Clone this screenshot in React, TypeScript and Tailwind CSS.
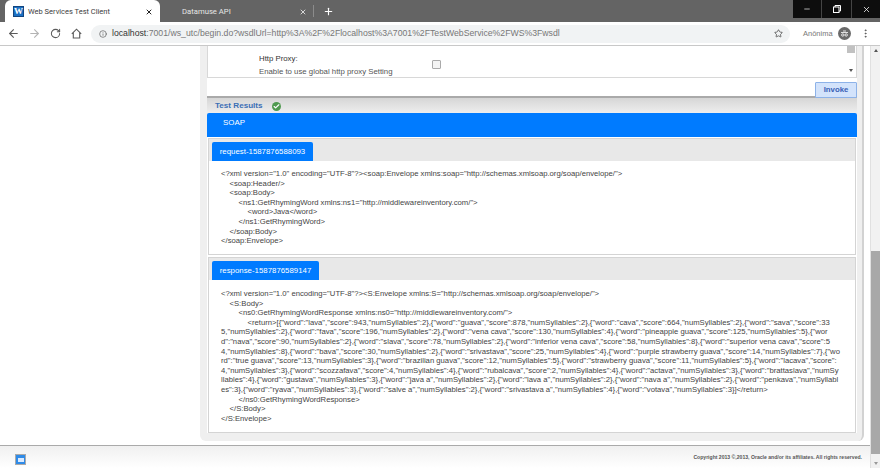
import React from 'react';
import { ArrowLeft, ArrowRight, RotateCw, Info, Star, X, Plus, Minus, MoreVertical, Check } from 'lucide-react';

const requestLines = [
  { pad: 'pl-0', text: '<?xml version="1.0" encoding="UTF-8"?><soap:Envelope xmlns:soap="http://schemas.xmlsoap.org/soap/envelope/">' },
  { pad: 'pl-[8.5px]', text: '<soap:Header/>' },
  { pad: 'pl-[8.5px]', text: '<soap:Body>' },
  { pad: 'pl-[17.5px]', text: '<ns1:GetRhymingWord xmlns:ns1="http://middlewareinventory.com/">' },
  { pad: 'pl-[26.5px]', text: '<word>Java</word>' },
  { pad: 'pl-[17.5px]', text: '</ns1:GetRhymingWord>' },
  { pad: 'pl-[8.5px]', text: '</soap:Body>' },
  { pad: 'pl-0', text: '</soap:Envelope>' },
];

const responseLines = [
  { pad: 'pl-0', text: '<?xml version="1.0" encoding="UTF-8"?><S:Envelope xmlns:S="http://schemas.xmlsoap.org/soap/envelope/">' },
  { pad: 'pl-[8.5px]', text: '<S:Body>' },
  { pad: 'pl-[17.5px]', text: '<ns0:GetRhymingWordResponse xmlns:ns0="http://middlewareinventory.com/">' },
  { pad: 'pl-[26.5px]', text: '<return>[{"word":"lava","score":943,"numSyllables":2},{"word":"guava","score":878,"numSyllables":2},{"word":"cava","score":664,"numSyllables":2},{"word":"sava","score":33' },
  { pad: 'pl-0', text: '5,"numSyllables":2},{"word":"fava","score":196,"numSyllables":2},{"word":"vena cava","score":130,"numSyllables":4},{"word":"pineapple guava","score":125,"numSyllables":5},{"wor' },
  { pad: 'pl-0', text: 'd":"nava","score":90,"numSyllables":2},{"word":"slava","score":78,"numSyllables":2},{"word":"inferior vena cava","score":58,"numSyllables":8},{"word":"superior vena cava","score":5' },
  { pad: 'pl-0', text: '4,"numSyllables":8},{"word":"bava","score":30,"numSyllables":2},{"word":"srivastava","score":25,"numSyllables":4},{"word":"purple strawberry guava","score":14,"numSyllables":7},{"wo' },
  { pad: 'pl-0', text: 'rd":"true guava","score":13,"numSyllables":3},{"word":"brazilian guava","score":12,"numSyllables":5},{"word":"strawberry guava","score":11,"numSyllables":5},{"word":"lacava","score":' },
  { pad: 'pl-0', text: '4,"numSyllables":3},{"word":"scozzafava","score":4,"numSyllables":4},{"word":"rubalcava","score":2,"numSyllables":4},{"word":"actava","numSyllables":3},{"word":"brattaslava","numSy' },
  { pad: 'pl-0', text: 'llables":4},{"word":"gustava","numSyllables":3},{"word":"java a","numSyllables":2},{"word":"lava a","numSyllables":2},{"word":"nava a","numSyllables":2},{"word":"penkava","numSyllabl' },
  { pad: 'pl-0', text: 'es":3},{"word":"ryava","numSyllables":3},{"word":"salve a","numSyllables":2},{"word":"srivastava a","numSyllables":4},{"word":"votava","numSyllables":3}]</return>' },
  { pad: 'pl-[17.5px]', text: '</ns0:GetRhymingWordResponse>' },
  { pad: 'pl-[8.5px]', text: '</S:Body>' },
  { pad: 'pl-0', text: '</S:Envelope>' },
];

const Message: React.FC<{ title: string; lines: { pad: string; text: string }[]; bodyClass: string; tabClass: string }> = ({ title, lines, bodyClass, tabClass }) => (
  <div className="border border-[#d4d4d4] bg-white">
    <div className="flex h-[22px] items-end bg-[#e8e8e8] pl-[3px]">
      <div className={`flex h-[19px] items-center justify-center rounded-t-[2px] bg-[#007bff] text-[7.85px] text-white ${tabClass}`}>{title}</div>
    </div>
    <div className={`whitespace-pre pl-[12px] text-[7.7px] leading-[9.6px] text-[#444] ${bodyClass}`}>
      {lines.map((l, i) => (
        <div key={i} className={l.pad}>{l.text}</div>
      ))}
    </div>
  </div>
);

export default function App() {
  return (
    <div className="flex h-[468px] w-[880px] flex-col overflow-hidden bg-white font-['Liberation_Sans',Arial,sans-serif]">
      {/* tab strip */}
      <div className="flex h-[22px] items-stretch bg-[#646464] font-['Roboto',sans-serif]">
        <div className="ml-[5px] flex w-[155px] items-center rounded-t-[6px] bg-white pl-[8px] pr-[7px] pt-[1px]">
          <div className="flex h-[11px] w-[11px] items-center justify-center border border-[#12457f] bg-[#1b6fc2] font-['Liberation_Serif',serif] text-[9px] font-bold leading-none text-white">W</div>
          <span className="ml-[4px] text-[7.5px] text-[#3c3c3c]">Web Services Test Client</span>
          <X size={8} strokeWidth={3} className="ml-auto text-[#222]" />
        </div>
        <div className="flex w-[153px] items-center pl-[22px] pr-[6px] pt-[1px] text-[7.7px] text-[#e6e6e6]">
          <span>Datamuse API</span>
          <X size={8} strokeWidth={2.5} className="ml-auto text-[#eee]" />
        </div>
        <div className="my-[5px] w-px bg-[#8c8c8c]" />
        <div className="flex w-[28px] items-center justify-center">
          <Plus size={11} strokeWidth={2.5} className="text-white" />
        </div>
        <div className="ml-auto flex h-[18px] w-[87px] bg-[#0d0d0d] text-white">
          <div className="flex w-[29px] items-center justify-center border-r border-[#444]"><Minus size={8} /></div>
          <div className="flex w-[30px] items-center justify-center border-r border-[#444]">
            <svg width="8" height="8" viewBox="0 0 8 8" fill="none" stroke="white" strokeWidth="1">
              <rect x="0.5" y="2" width="5.5" height="5.5" />
              <path d="M2 2V0.5H7.5V6H6" />
            </svg>
          </div>
          <div className="flex flex-1 items-center justify-center"><X size={9} /></div>
        </div>
      </div>

      {/* toolbar */}
      <div className="flex h-[24px] items-center border-b border-[#c8c8c8] bg-white">
        <div className="flex w-[91px] flex-none items-center pl-[3px]">
          <div className="flex w-[21px] justify-center"><ArrowLeft size={13} className="text-[#5a5a5a]" /></div>
          <div className="flex w-[21px] justify-center"><ArrowRight size={13} className="text-[#b4b4b4]" /></div>
          <div className="flex w-[21px] justify-center"><RotateCw size={11} strokeWidth={2.2} className="text-[#5a5a5a]" /></div>
          <div className="flex w-[21px] justify-center">
            <svg width="11" height="11" viewBox="0 0 11 11" fill="none" stroke="#5a5a5a" strokeWidth="1.1">
              <path d="M0.8 5.8L5.5 1.2L10.2 5.8M2.3 4.8V10H8.7V4.8" />
            </svg>
          </div>
        </div>
        <div className="flex h-[18px] w-[699px] flex-none items-center rounded-full bg-[#f1f3f4] pl-[8px] pr-[7px] text-[8.7px]">
          <Info size={8} className="text-[#5a5a5a]" />
          <span className="ml-[5px] text-[#333]">localhost</span>
          <span className="text-[#777]">:7001/ws_utc/begin.do?wsdlUrl=http%3A%2F%2Flocalhost%3A7001%2FTestWebService%2FWS%3Fwsdl</span>
          <Star size={9} className="ml-auto text-[#444]" />
        </div>
        <span className="ml-[13px] text-[7.5px] text-[#777]">Anônima</span>
        <div className="ml-[5px] flex h-[13px] w-[13px] items-center justify-center rounded-full bg-[#6a6a6a]">
          <svg width="9" height="7" viewBox="0 0 9 7" fill="none" stroke="white" strokeWidth="0.8">
            <path d="M1 2.5H8M3 1h3" />
            <circle cx="2.8" cy="5" r="1.2" />
            <circle cx="6.2" cy="5" r="1.2" />
          </svg>
        </div>
        <MoreVertical size={11} className="ml-[9px] text-[#555]" />
      </div>

      {/* page */}
      <div className="flex min-h-0 flex-1">
        <div className="flex min-w-0 flex-1 flex-col">
          <div className="h-[399px] overflow-hidden pl-[200px] pr-[6px]">
            <div className="h-[395px] rounded-b-[6px] border-r-2 border-[#d2d2d2] bg-[#efefef] pl-[7px] pr-[5px]">
              <div className="bg-white">
                <div className="flex h-[32px] border-x border-b border-[#d8d8d8] bg-white">
                  <div className="flex flex-1 items-start pl-[51px] pt-[6px] text-[7.8px] leading-[13px] text-[#555]">
                    <div>
                      <div className="text-[#333]">Http Proxy:</div>
                      <div>Enable to use global http proxy Setting</div>
                    </div>
                    <div className="ml-[39px] mt-[8px] h-[9px] w-[9px] rounded-[1px] border border-[#aaa] bg-[#f4f4f4]" />
                  </div>
                  <div className="mr-[1px] flex w-[9px] flex-col items-center justify-between pb-[5px]">
                    <div className="h-[7px] w-[8px] bg-[#c1c1c1]" />
                    <div className="h-0 w-0 border-x-[2px] border-t-[3px] border-x-transparent border-t-[#555]" />
                  </div>
                </div>
                <div className="flex h-[20px] justify-end border-b-2 border-[#aaa] bg-white pt-[4px]">
                  <div className="flex h-[16px] w-[42px] items-center justify-center rounded-[1px] border border-[#8db2e8] bg-[#d3e3fb] text-[7.8px] font-bold text-[#3a5fb5]">Invoke</div>
                </div>
              </div>
              <div className="flex h-[15px] items-center bg-gradient-to-b from-[#d6d6d6] to-[#eeeeee] pl-[8px] pt-[1px]">
                <span className="text-[8.1px] font-bold text-[#3b6fb5]">Test Results</span>
                <div className="ml-[9px] flex h-[9px] w-[9px] items-center justify-center rounded-full bg-[#4f9a4f]">
                  <Check size={7} strokeWidth={4} className="text-white" />
                </div>
              </div>
              <div className="h-[24px] rounded-t-[2px] bg-[#007bff] pl-[16px] pt-[4px] text-[7.9px] text-white">SOAP</div>
              <div className="flex flex-col gap-[2px] bg-white px-[1px] pt-[1px]">
                <Message title="request-1587876588093" lines={requestLines} tabClass="w-[101px]" bodyClass="h-[93px] pt-[8px]" />
                <Message title="response-1587876589147" lines={responseLines} tabClass="w-[107px]" bodyClass="h-[152px] pt-[9px]" />
              </div>
            </div>
          </div>
          <div className="flex h-[23px] items-start border-t border-[#aaa] bg-gradient-to-b from-[#f0f0f0] to-white pl-[15px] pr-[8px] pt-[8px]">
            <div className="flex h-[11px] w-[11px] items-center justify-center border border-[#aaa] bg-[#2f8be8]">
              <div className="h-[4px] w-[6px] bg-[#dbeafe]" />
            </div>
            <span className="ml-auto text-[5.1px] font-bold leading-[7px] text-[#555]">Copyright 2013 ©,2013, Oracle and/or its affiliates. All rights reserved.</span>
          </div>
        </div>
        {/* page scrollbar */}
        <div className="flex w-[10px] flex-col items-center border-l border-[#e0e0e0] bg-[#f1f1f1]">
          <div className="mt-[3px] h-0 w-0 border-x-[2px] border-b-[3px] border-x-transparent border-b-[#555]" />
          <div className="mt-[199px] h-[203px] w-full bg-[#a8a8a8]" />
          <div className="mt-[8px] h-0 w-0 border-x-[2px] border-t-[3px] border-x-transparent border-t-[#999]" />
        </div>
      </div>
    </div>
  );
}
